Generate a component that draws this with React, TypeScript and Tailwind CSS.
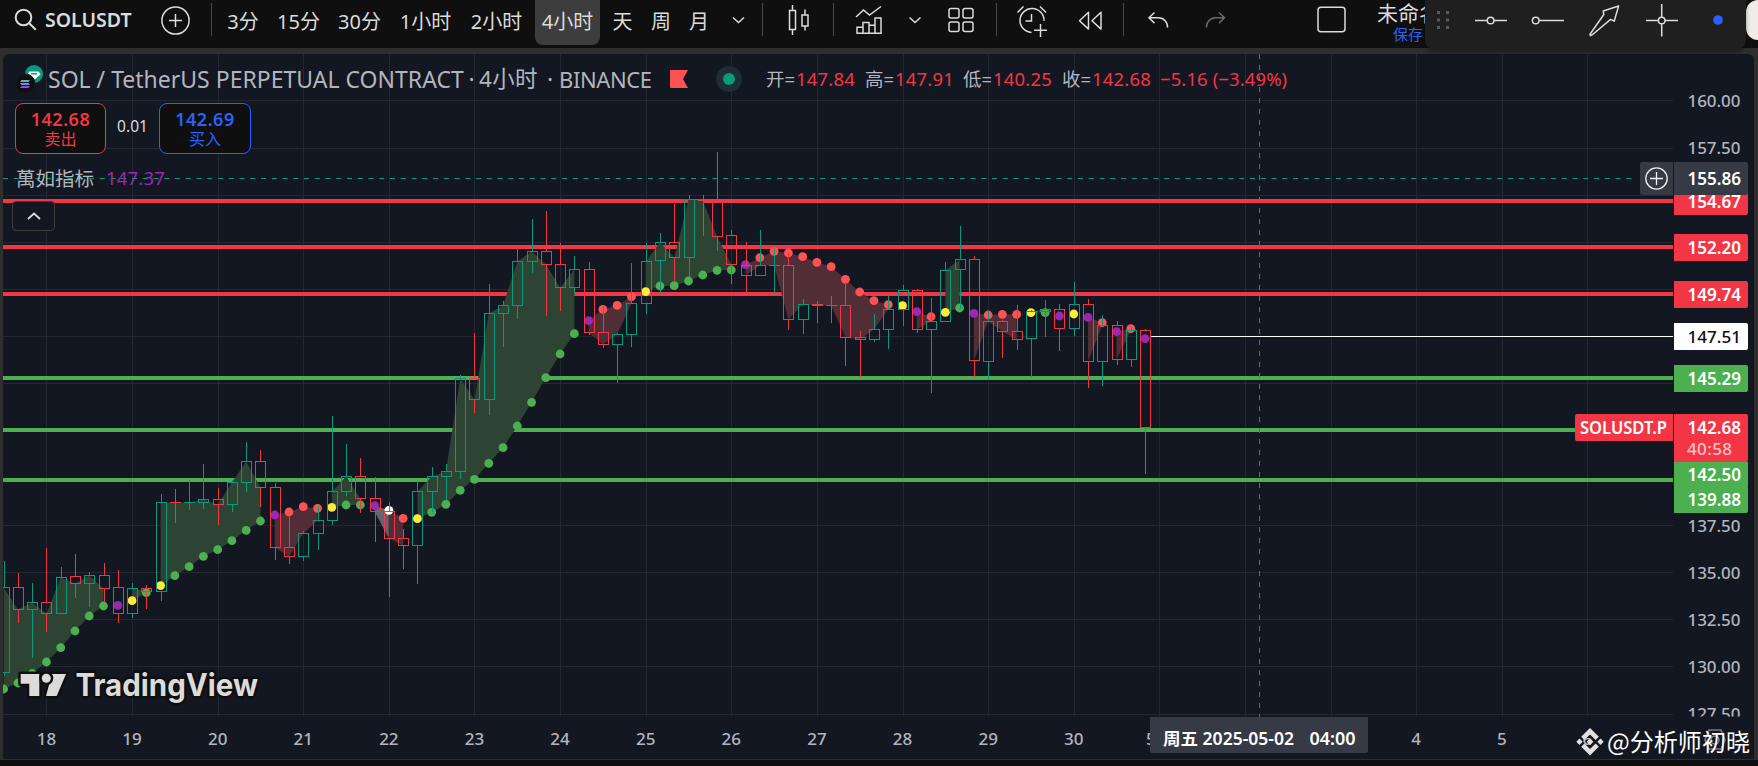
import React from "react";

type Dot = "g" | "r" | "y" | "p" | "w";
type Bar = [number, number, number, number, "u" | "d", number, Dot];

const SANS = '"Noto Sans", "Noto Sans CJK SC", sans-serif';

const DOT_FILL: Record<Dot, string> = {
  g: "#4caf50",
  r: "#ff5252",
  y: "#ffeb3b",
  p: "#9c27b0",
  w: "#ffffff",
};

// high, body top, body bottom, low, direction, indicator level, indicator state
const BARS: Bar[] = [
  [561, 587, 672, 675, "u", 689, "g"],
  [573, 587, 609, 622, "d", 683, "g"],
  [583, 602, 609, 657, "u", 673.5, "g"],
  [548, 602, 613, 631, "d", 662, "g"],
  [567, 577, 613, 613, "u", 647.7, "g"],
  [554, 576, 583, 597, "d", 631, "g"],
  [572, 575, 583, 606, "u", 616, "g"],
  [563, 575, 588, 601, "d", 606, "g"],
  [570, 587, 613, 622, "d", 605.3, "p"],
  [583, 588, 613, 617, "u", 600.7, "y"],
  [585, 588, 591, 608, "d", 592.7, "g"],
  [494, 502, 591, 600, "u", 585.7, "y"],
  [489, 502, 502, 522, "d", 575.7, "g"],
  [480, 502, 502, 509, "u", 566.7, "g"],
  [464, 499, 502, 508, "u", 556.3, "g"],
  [488, 499, 504, 524, "d", 549.7, "g"],
  [480, 482, 504, 511, "u", 540.7, "g"],
  [442, 461, 482, 491, "u", 530.3, "g"],
  [450, 461, 487, 506, "d", 521, "g"],
  [483, 487, 547, 559, "d", 515, "p"],
  [515, 547, 556, 563, "d", 512, "r"],
  [531, 533, 556, 560, "u", 506.7, "r"],
  [506, 520, 533, 549, "u", 508.3, "r"],
  [416, 491, 520, 524, "u", 507.3, "y"],
  [444, 476, 491, 495, "u", 505, "g"],
  [458, 476, 498, 512, "d", 505, "g"],
  [477, 498, 511, 541, "d", 505.7, "p"],
  [502, 511, 538, 596, "d", 510.3, "w"],
  [529, 538, 545, 568, "d", 518.3, "r"],
  [481, 491, 545, 583, "u", 518.7, "y"],
  [467, 476, 491, 512, "u", 512.3, "g"],
  [464, 471, 476, 499, "u", 504.3, "g"],
  [375, 378, 471, 478, "u", 490.3, "g"],
  [333, 378, 399, 412, "d", 479.3, "g"],
  [284, 313, 399, 414, "u", 463.3, "g"],
  [301, 305, 313, 346, "u", 447.7, "g"],
  [247, 261, 305, 318, "u", 426, "g"],
  [219, 251, 261, 272, "u", 402.3, "g"],
  [211, 251, 264, 315, "d", 377.7, "g"],
  [243, 264, 287, 310, "d", 354, "g"],
  [256, 269, 287, 292, "u", 333.7, "g"],
  [262, 269, 332, 334, "d", 320.7, "p"],
  [306, 332, 344, 347, "d", 309.3, "r"],
  [333, 334, 344, 382, "u", 305.3, "r"],
  [263, 303, 334, 346, "u", 296.7, "r"],
  [243, 261, 303, 313, "u", 291.7, "y"],
  [233, 242, 260, 292, "u", 286, "g"],
  [204, 242, 257, 281, "d", 285.7, "g"],
  [195, 199, 257, 276, "u", 281, "g"],
  [195, 199, 200, 235, "d", 275, "g"],
  [152, 200, 236, 250, "d", 270.3, "g"],
  [230, 235, 264, 283, "d", 270, "g"],
  [242, 265, 275, 292, "d", 264.7, "p"],
  [230, 265, 275, 275, "u", 257.7, "r"],
  [247, 265, 265, 292, "u", 251.3, "r"],
  [253, 265, 319, 329, "d", 253, "r"],
  [299, 304, 319, 333, "u", 256.7, "r"],
  [301, 304, 305, 322, "d", 262.3, "r"],
  [296, 305, 305, 322, "d", 266.7, "r"],
  [282, 305, 337, 365, "d", 279.3, "r"],
  [331, 337, 339, 376, "d", 292, "r"],
  [314, 329, 339, 341, "u", 300.7, "r"],
  [295, 309, 329, 348, "u", 304.7, "r"],
  [285, 290, 309, 325, "u", 305.7, "y"],
  [289, 290, 329, 332, "d", 311.7, "p"],
  [298, 321, 329, 392, "u", 316.7, "r"],
  [262, 270, 321, 321, "u", 312.3, "y"],
  [226, 259, 269, 308, "u", 308, "g"],
  [256, 259, 360, 376, "d", 313.3, "p"],
  [311, 321, 361, 379, "u", 315, "r"],
  [320, 321, 331, 357, "d", 314.3, "r"],
  [305, 331, 339, 349, "d", 314.3, "r"],
  [310, 311, 338, 376, "u", 312.7, "y"],
  [300, 309, 311, 336, "u", 312.7, "g"],
  [304, 309, 328, 350, "d", 316, "p"],
  [282, 304, 328, 335, "u", 314, "y"],
  [299, 304, 361, 387, "d", 317.3, "p"],
  [315, 325, 361, 385, "u", 322.7, "r"],
  [321, 325, 359, 364, "d", 331.7, "p"],
  [327, 330, 359, 366, "u", 328.7, "r"],
  [329, 330, 427, 473, "d", 338.7, "p"],
];

const FIRST = -3;
const RUNS: [number, number, string][] = [
  [-3, 4, "#2d4432"],
  [6, 7, "#2d4432"],
  [8, 15, "#2d4432"],
  [16, 19, "#512d35"],
  [20, 22, "#2d4432"],
  [23, 24, "#62656d"],
  [24, 25, "#512d35"],
  [26, 37, "#2d4432"],
  [38, 41, "#512d35"],
  [42, 48, "#2d4432"],
  [49, 59, "#512d35"],
  [61, 62, "#512d35"],
  [63, 64, "#2d4432"],
  [65, 68, "#512d35"],
  [69, 70, "#2d4432"],
  [73, 74, "#512d35"],
  [75, 76, "#512d35"],
];

const xAt = (i: number) => 46.45 + 14.268 * i;
const colAt = (i: number) => Math.round(xAt(i));
const closeAt = (i: number) => {
  const b = BARS[i - FIRST];
  return (b[4] === "u" ? b[1] : b[2]) + 0.5;
};

function runPoints(a: number, b: number) {
  const pts: string[] = [];
  for (let i = a; i <= b; i++) pts.push(`${xAt(i)},${closeAt(i)}`);
  for (let i = b; i >= a; i--) pts.push(`${xAt(i)},${BARS[i - FIRST][5]}`);
  return pts.join(" ");
}

function Candle({ i, bar }: { i: number; bar: Bar }) {
  const [h, t, b, l, dir] = bar;
  const x = colAt(i) + 0.5;
  const c = dir === "u" ? "#089981" : "#f23645";
  return (
    <g stroke={c} fill="none">
      {h < t && <line x1={x} x2={x} y1={h} y2={t} />}
      {l > b && <line x1={x} x2={x} y1={b} y2={l + 1} />}
      {b === t ? (
        <line x1={x - 5.5} x2={x + 5.5} y1={t + 0.5} y2={t + 0.5} />
      ) : (
        <rect x={x - 5} y={t + 0.5} width={10} height={b - t} />
      )}
    </g>
  );
}

const H_GRID = [100, 148, 195, 242, 289, 336, 383, 430, 478, 525, 572, 619, 666, 714];
const LEVELS: [number, string][] = [
  [199, "#f23645"],
  [245, "#f23645"],
  [292, "#f23645"],
  [376, "#4caf50"],
  [428, "#4caf50"],
  [478, "#4caf50"],
];
const AXIS: [string, number][] = [
  ["160.00", 101],
  ["157.50", 148],
  ["137.50", 526],
  ["135.00", 573],
  ["132.50", 620],
  ["130.00", 667],
  ["127.50", 714],
];
// label, top, height, background, text colour, text centre
const TAGS: [string, number, number, string, string, number][] = [
  ["154.67", 188, 27, "#f23645", "#ffffff", 202],
  ["155.86", 162, 33, "#363a45", "#ffffff", 179],
  ["152.20", 234, 27, "#f23645", "#ffffff", 248],
  ["149.74", 281, 27, "#f23645", "#ffffff", 295],
  ["147.51", 323, 27, "#ffffff", "#0f0f0f", 337],
  ["145.29", 365, 27, "#4caf50", "#ffffff", 379],
  ["139.88", 486, 27, "#4caf50", "#ffffff", 500],
  ["142.50", 461, 27, "#4caf50", "#ffffff", 475],
  ["142.68", 414, 48, "#f23645", "#ffffff", 428],
];
const DAYS: [string, number][] = [
  ["18", 0], ["19", 6], ["20", 12], ["21", 18], ["22", 24], ["23", 30], ["24", 36],
  ["25", 42], ["26", 48], ["27", 54], ["28", 60], ["29", 66], ["30", 72], ["5月", 78],
  ["4", 96], ["5", 102], ["6", 108],
];

function Chart() {
  const days: number[] = [];
  for (let k = 0; k <= 18; k++) days.push(colAt(k * 6) + 0.5);
  return (
    <svg className="block" width={1751} height={705} viewBox="3 54 1751 705" fontFamily={SANS} fontSize={17}>
      <defs>
        <clipPath id="plot">
          <rect x={3} y={54} width={1670} height={663} />
        </clipPath>
        <clipPath id="scale">
          <rect x={1673} y={54} width={81} height={662.5} />
        </clipPath>
      </defs>
      <g clipPath="url(#plot)">
        <g stroke="#232732">
          {H_GRID.map((y) => (
            <line key={y} x1={3} x2={1673} y1={y + 0.5} y2={y + 0.5} />
          ))}
          {days.map((x) => (
            <line key={x} x1={x} x2={x} y1={54} y2={717} />
          ))}
        </g>
        {LEVELS.map(([y, c]) => (
          <rect key={y} x={3} y={y} width={1670} height={4} fill={c} />
        ))}
        <rect x={1150} y={336} width={523} height={1} fill="#ffffff" />
        {RUNS.map(([a, b, c]) => (
          <polygon key={a} points={runPoints(a, b)} fill={c} />
        ))}
        {BARS.map((b, n) => (
          <circle key={n} cx={xAt(n + FIRST)} cy={b[5]} r={4.4} fill={DOT_FILL[b[6]]} />
        ))}
        {BARS.map((b, n) => (
          <Candle key={n} i={n + FIRST} bar={b} />
        ))}
        <line x1={3} x2={1637} y1={178.5} y2={178.5} stroke="#089981" strokeDasharray="5 5.75" />
        <line x1={1259.5} x2={1259.5} y1={54} y2={717} stroke="#089981" strokeDasharray="5 6" />
      </g>

      <g clipPath="url(#scale)" fill="#b2b5be" fontWeight={500}>
        {AXIS.map(([t, y]) => (
          <text key={t} x={1687.5} y={y + 6} textLength={53}>
            {t}
          </text>
        ))}
      </g>
      {TAGS.map(([t, y, h, bg, fg, cy]) => (
        <g key={t}>
          <path d={`M1674 ${y}h72a2 2 0 0 1 2 2v${h - 4}a2 2 0 0 1 -2 2h-72z`} fill={bg} />
          <text x={1687.5} y={cy + 6} textLength={53.5} lengthAdjust="spacingAndGlyphs" fontWeight={fg === "#ffffff" ? 600 : 500} fill={fg}>
            {t}
          </text>
        </g>
      ))}
      <text x={1687} y={455} textLength={45} fontWeight={500} fill="#fbc3c7">
        40:58
      </text>
      <path d="M1577 414h96v27h-96a2 2 0 0 1 -2 -2v-23a2 2 0 0 1 2 -2z" fill="#f23645" />
      <text x={1580} y={434} textLength={87} lengthAdjust="spacingAndGlyphs" fontWeight={600} fill="#ffffff">
        SOLUSDT.P
      </text>
      <path d="M1642 162h31v33h-31a2 2 0 0 1 -2 -2v-29a2 2 0 0 1 2 -2z" fill="#363a45" />
      <g stroke="#f0f0f0" strokeWidth={1.3} fill="none">
        <circle cx={1656.5} cy={178.5} r={10.7} />
        <path d="M1656.5 172v13M1650 178.5h13" />
      </g>

      <g fill="#b2b5be" textAnchor="middle" fontWeight={500}>
        {DAYS.map(([t, i]) => (
          <text key={i} x={xAt(i)} y={744.5}>
            {t}
          </text>
        ))}
      </g>
      <path d="M1150 717h218v34a2 2 0 0 1 -2 2h-214a2 2 0 0 1 -2 -2z" fill="#363a45" />
      <g fill="#ffffff" fontWeight={600}>
        <text x={1163} y={744.5} textLength={131} lengthAdjust="spacingAndGlyphs">
          周五 2025-05-02
        </text>
        <text x={1309.5} y={744.5} textLength={46} lengthAdjust="spacingAndGlyphs">
          04:00
        </text>
      </g>

      <g fill="#dbdbdb" stroke="#0f0f0f" strokeWidth={5} strokeLinejoin="round" paintOrder="stroke">
        <path d="M20.7 674h18.6v22h-10v-12.3h-8.6z" />
        <path d="M52 674h14l-9.3 22h-10.7z" />
        <circle cx={46.3} cy={678.2} r={4.5} />
        <text x={75.5} y={696} fontFamily="Inter, sans-serif" fontSize={31} fontWeight={700} textLength={182.5} lengthAdjust="spacingAndGlyphs">
          TradingView
        </text>
      </g>

      <g fill="none" stroke="#787b86" strokeWidth={1.6}>
        <path d="M1709 730h12l4 10-4 9h-12l-4-9z" />
        <circle cx={1715} cy={740} r={4} />
      </g>
      <g fill="#dfe1df">
        <path d="M1590 728l8.8 8.8-3.2 3.2-5.6-5.6-5.6 5.6-3.2-3.2z" />
        <path d="M1590 755.5l8.8-8.8-3.2-3.2-5.6 5.6-5.6-5.6-3.2 3.2z" />
        <path d="M1579.5 738.6l3.2 3.2-3.2 3.2-3.2-3.2z" />
        <path d="M1600.5 738.6l3.2 3.2-3.2 3.2-3.2-3.2z" />
        <path d="M1590 738.4l3.4 3.4-3.4 3.4-3.4-3.4z" />
      </g>
      <text x={1607} y={751} fontFamily='"Noto Sans CJK SC", sans-serif' fontSize={24} textLength={143} lengthAdjust="spacingAndGlyphs" fill="#ffffff">
        @分析师初晓
      </text>
    </svg>
  );
}

function Glyph({ x, w, className, children }: { x: number; w: number; className: string; children: React.ReactNode }) {
  return (
    <svg
      className={"h-12 shrink-0 " + className}
      width={w}
      height={48}
      viewBox={`${x} 0 ${w} 48`}
      fill="none"
      stroke="#dbdbdb"
      strokeWidth={1.5}
      overflow="visible"
    >
      {children}
    </svg>
  );
}

const Divider = ({ className }: { className: string }) => (
  <div className={"mt-[3px] h-[33px] w-px shrink-0 self-start bg-[#4a4a4a] " + className} />
);

const Interval = ({ className, children }: { className: string; children: string }) => (
  <div className={"flex h-[43px] shrink-0 items-center justify-center self-start whitespace-nowrap text-[20px] text-[#dbdbdb] " + className}>
    {children}
  </div>
);

function Toolbar() {
  return (
    <header className="relative flex h-12 shrink-0 items-center bg-[#0f0f0f]">
      <Glyph x={15} w={22} className="ml-[15px]">
        <circle cx={23.5} cy={17.5} r={7.8} strokeWidth={2} />
        <path d="M29.3 23.3l6.5 6.5" strokeWidth={2} />
      </Glyph>
      <div className="ml-2 flex h-10 w-[87px] items-center self-start whitespace-nowrap text-[19.5px] font-semibold text-[#dbdbdb]">SOLUSDT</div>
      <Glyph x={161} w={29} className="ml-[29px]">
        <circle cx={175.5} cy={20.5} r={13.6} />
        <path d="M175.5 14v13M169 20.5h13" />
      </Glyph>
      <Divider className="ml-[21px]" />
      <Interval className="ml-[15px] w-8">3分</Interval>
      <Interval className="ml-[18px] w-[43px]">15分</Interval>
      <Interval className="ml-[18px] w-[43px]">30分</Interval>
      <Interval className="ml-[18px] w-[53px]">1小时</Interval>
      <Interval className="ml-[18px] w-[53px]">2小时</Interval>
      <div className="ml-3 h-[45px] w-[65px] shrink-0 self-start rounded-b-lg bg-[#3d3d3d]">
        <Interval className="w-full">4小时</Interval>
      </div>
      <Interval className="ml-3 w-[21px]">天</Interval>
      <Interval className="ml-[18px] w-5">周</Interval>
      <Interval className="ml-[18px] w-5">月</Interval>
      <Glyph x={732} w={13} className="ml-[23px]">
        <path d="M733 17.5l5.5 5 5.5-5" />
      </Glyph>
      <Divider className="ml-[17px]" />
      <Glyph x={788} w={22} className="ml-[25px]">
        <path d="M789.5 10.5h6v19h-6zM792.5 5v5.5M792.5 29.5v5.5M802 15h6v11h-6zM805 9.5v5.5M805 26v4.5" />
      </Glyph>
      <Divider className="ml-[23px]" />
      <Glyph x={855} w={28} className="ml-[21px]">
        <path d="M856 17l7.5-7 6 5 11.5-8.5M857 33.3v-6h6v6M863 33.3V22.5h6v10.8M869 33.3v-8h6v8M875 33.3V18h6v15.3M856.3 33.3h25.5" />
      </Glyph>
      <Glyph x={909} w={12} className="ml-[26px]">
        <path d="M909.5 17.5l5.5 5 5.5-5" />
      </Glyph>
      <Glyph x={948} w={26} className="ml-[27px]">
        <rect x={949} y={8.5} width={10} height={9.5} rx={2} />
        <rect x={963} y={8.5} width={10} height={9.5} rx={2} />
        <rect x={949} y={22} width={10} height={9.5} rx={2} />
        <rect x={963} y={22} width={10} height={9.5} rx={2} />
      </Glyph>
      <Divider className="ml-[22px]" />
      <Glyph x={1017} w={30} className="ml-[20px]">
        <path d="M1031.5 32.4a12 12 0 1 1 12.5-11.5M1031.5 14v7h-6M1017.5 12.5l6-6M1046 12.5l-6-6M1040.5 24v13M1034 30.3h13" />
      </Glyph>
      <Glyph x={1077} w={25} className="ml-[30px]">
        <path d="M1088.5 12.3v16.8l-9-8.4zM1101 12.3v16.8l-9-8.4z" strokeLinejoin="round" />
      </Glyph>
      <Divider className="ml-[21px]" />
      <Glyph x={1148} w={21} className="ml-[24px]">
        <path d="M1154.5 12.5l-5.5 5.3 5.5 5.3M1149.5 17.8h9a9 9 0 0 1 9 9.7" />
      </Glyph>
      <Glyph x={1206} w={20} className="ml-[37px]">
        <path d="M1219 12.5l5.5 5.3-5.5 5.3M1224 17.8h-8.5a9 9 0 0 0-9 9.7" stroke="#6b6b6b" />
      </Glyph>
      <Glyph x={1317} w={29} className="ml-[91px]">
        <rect x={1318} y={7.2} width={27} height={24.5} rx={3} />
      </Glyph>
      <div className="ml-[31px] flex h-12 w-16 shrink-0 flex-col whitespace-nowrap text-[#dbdbdb]">
        <span className="text-[21px] leading-[27px]">未命名</span>
        <span className="ml-4 text-[15px] leading-[15px] text-[#2962ff]">保存</span>
      </div>
      <div className="absolute left-[1746px] top-0 h-10 w-3 rounded-l-full bg-[#f1ecea]" />
      <div className="absolute left-[1425px] top-0 z-10 flex h-[50px] w-[321px] items-center rounded-b-[10px] bg-[#1f1f1f] shadow-[0_2px_4px_rgba(0,0,0,0.4)]">
        <Glyph x={1436} w={14} className="ml-[11px]">
          <g fill="#5a5a5a" stroke="none">
            {[11.5, 19, 26.5].map((y) => (
              <g key={y}>
                <rect x={1437} y={y - 1.5} width={3} height={3} />
                <rect x={1446} y={y - 1.5} width={3} height={3} />
              </g>
            ))}
          </g>
        </Glyph>
        <Glyph x={1475} w={32} className="ml-[25px]">
          <circle cx={1490.6} cy={19.5} r={3.3} />
          <path d="M1475 19.5h12.3M1494 19.5h13" />
        </Glyph>
        <Glyph x={1532} w={32} className="ml-[25px]">
          <circle cx={1535.7} cy={19.5} r={3.3} />
          <path d="M1539 19.5h25" />
        </Glyph>
        <Glyph x={1589} w={30} className="ml-[25px]">
          <path d="M1590 33.3l13.800-19.800-.600-3.500 15.400-5-4.400 15.200-3.600-1.800-18 15.100-2.300 1.200z" strokeLinejoin="round" />
        </Glyph>
        <Glyph x={1646} w={32} className="ml-[27px]">
          <circle cx={1661.7} cy={19.5} r={3.3} />
          <path d="M1646 19.5h12.3M1665 19.5h13M1661.7 3v13M1661.7 23v12.500" />
        </Glyph>
        <Glyph x={1713} w={10} className="ml-[35px]">
          <circle cx={1718} cy={19} r={4.8} fill="#2962ff" stroke="none" />
        </Glyph>
      </div>
    </header>
  );
}

function Quote({ label, value, className }: { label: string; value: string; className: string }) {
  return (
    <span className={"shrink-0 " + className}>
      {label}
      <span className="tracking-[0.9px]">=</span>
      <span className="tracking-[0.2px] text-[#f23645]">{value}</span>
    </span>
  );
}

function Legend() {
  return (
    <div className="absolute left-0 top-0 flex flex-col">
      <div className="mt-[11px] flex h-7 items-center whitespace-nowrap text-[#b2b5be]">
        <svg className="ml-[13px] shrink-0" width={30} height={28} viewBox="16 64 30 28">
          <circle cx={34} cy={73} r={9} fill="#089981" />
          <path d="M29.5 70.5h9l2 3-6.5 5.5-6.5-5.5z" fill="#ffffff" />
          <path d="M31 72h6v1.5h-6z" fill="#089981" />
          <circle cx={25.5} cy={82.5} r={9.5} fill="#0f0f0f" stroke="#131722" />
          <path d="M21.5 79h8.5l-1.5 2h-8.5z" fill="#4fb7c8" />
          <path d="M20 82h8.500l1.500 2h-8.500z" fill="#7a8fd8" />
          <path d="M21.500 85h8.500l-1.500 2h-8.500z" fill="#9945ff" />
        </svg>
        <span className="ml-[2px] flex w-[511px] shrink-0 items-center text-[23px]">
          <span className="w-[416px] shrink-0">SOL / TetherUS PERPETUAL CONTRACT</span>
          <span className="w-[15px] shrink-0 text-center">·</span>
          <span className="w-[63px] shrink-0 text-[22.5px] tracking-[0.3px]">4小时</span>
          <span className="w-[16px] shrink-0 text-center">·</span>
        </span>
        <span className="w-[93px] shrink-0 text-[22px] tracking-[-0.4px]">BINANCE</span>
        <svg className="ml-[18px] shrink-0" width={18} height={18} viewBox="0 0 18 18">
          <path d="M1 0h17l-5 9 5 9H1a1 1 0 0 1-1-1V1a1 1 0 0 1 1-1z" fill="#ff5252" />
        </svg>
        <div className="ml-7 flex size-[26px] shrink-0 items-center justify-center rounded-full bg-[#1f2d36]">
          <div className="size-3 rounded-full bg-[#089981]" />
        </div>
        <div className="ml-[24px] flex shrink-0 text-[18.5px]">
          <Quote className="w-[99px]" label="开" value="147.84" />
          <Quote className="w-[98px]" label="高" value="147.91" />
          <Quote className="w-[99px]" label="低" value="140.25" />
          <Quote className="w-[98px]" label="收" value="142.68" />
          <span className="tracking-[0.1px] text-[#f23645]">−5.16 (−3.49%)</span>
        </div>
      </div>

      <div className="ml-3 mt-[10px] flex h-[51px] items-stretch">
        <div className="flex w-[91px] flex-col items-center justify-center rounded-lg border border-[#f23645] bg-[#0f0f0f] text-[#f23645]">
          <span className="text-[18px] font-semibold leading-[20px] tracking-[0.5px]">142.68</span>
          <span className="text-[16px] leading-[20px]">卖出</span>
        </div>
        <span className="flex w-[53px] items-center justify-center pb-[3px] text-[15.5px] text-[#dbdbdb]">0.01</span>
        <div className="flex w-[92px] flex-col items-center justify-center rounded-lg border border-[#2962ff] bg-[#0f0f0f] text-[#2962ff]">
          <span className="text-[18px] font-semibold leading-[20px] tracking-[0.5px]">142.69</span>
          <span className="text-[16px] leading-[20px]">买入</span>
        </div>
      </div>

      <div className="ml-[13px] mt-[11px] flex h-7 items-center whitespace-nowrap">
        <span className="w-[90px] text-[19.5px] text-[#b2b5be]">萬如指标</span>
        <span className="pb-[2px] text-[18.5px] tracking-[0.2px] text-[#9c27b0]">147.37</span>
      </div>

      <div className="ml-[9px] mt-[8px] flex h-[30px] w-[43px] items-center justify-center rounded border border-[#3d3d3d] bg-[#131722]">
        <svg width={14} height={8} viewBox="0 0 14 8" fill="none" stroke="#dbdbdb" strokeWidth={1.8}>
          <path d="M1 7l6-5.500 6 5.500" />
        </svg>
      </div>
    </div>
  );
}

export default function App() {
  return (
    <div className="flex h-[766px] w-[1758px] flex-col overflow-hidden bg-[#0f0f0f] font-['Noto_Sans','Noto_Sans_CJK_SC',sans-serif]">
      <Toolbar />
      <main className="h-[712px] shrink-0 bg-[#2e2e2e] pb-px pl-[3px] pr-1 pt-1.5">
        <div className="relative h-[705px] overflow-hidden rounded-t-md bg-[#131722]">
          <Chart />
          <Legend />
        </div>
      </main>
    </div>
  );
}
